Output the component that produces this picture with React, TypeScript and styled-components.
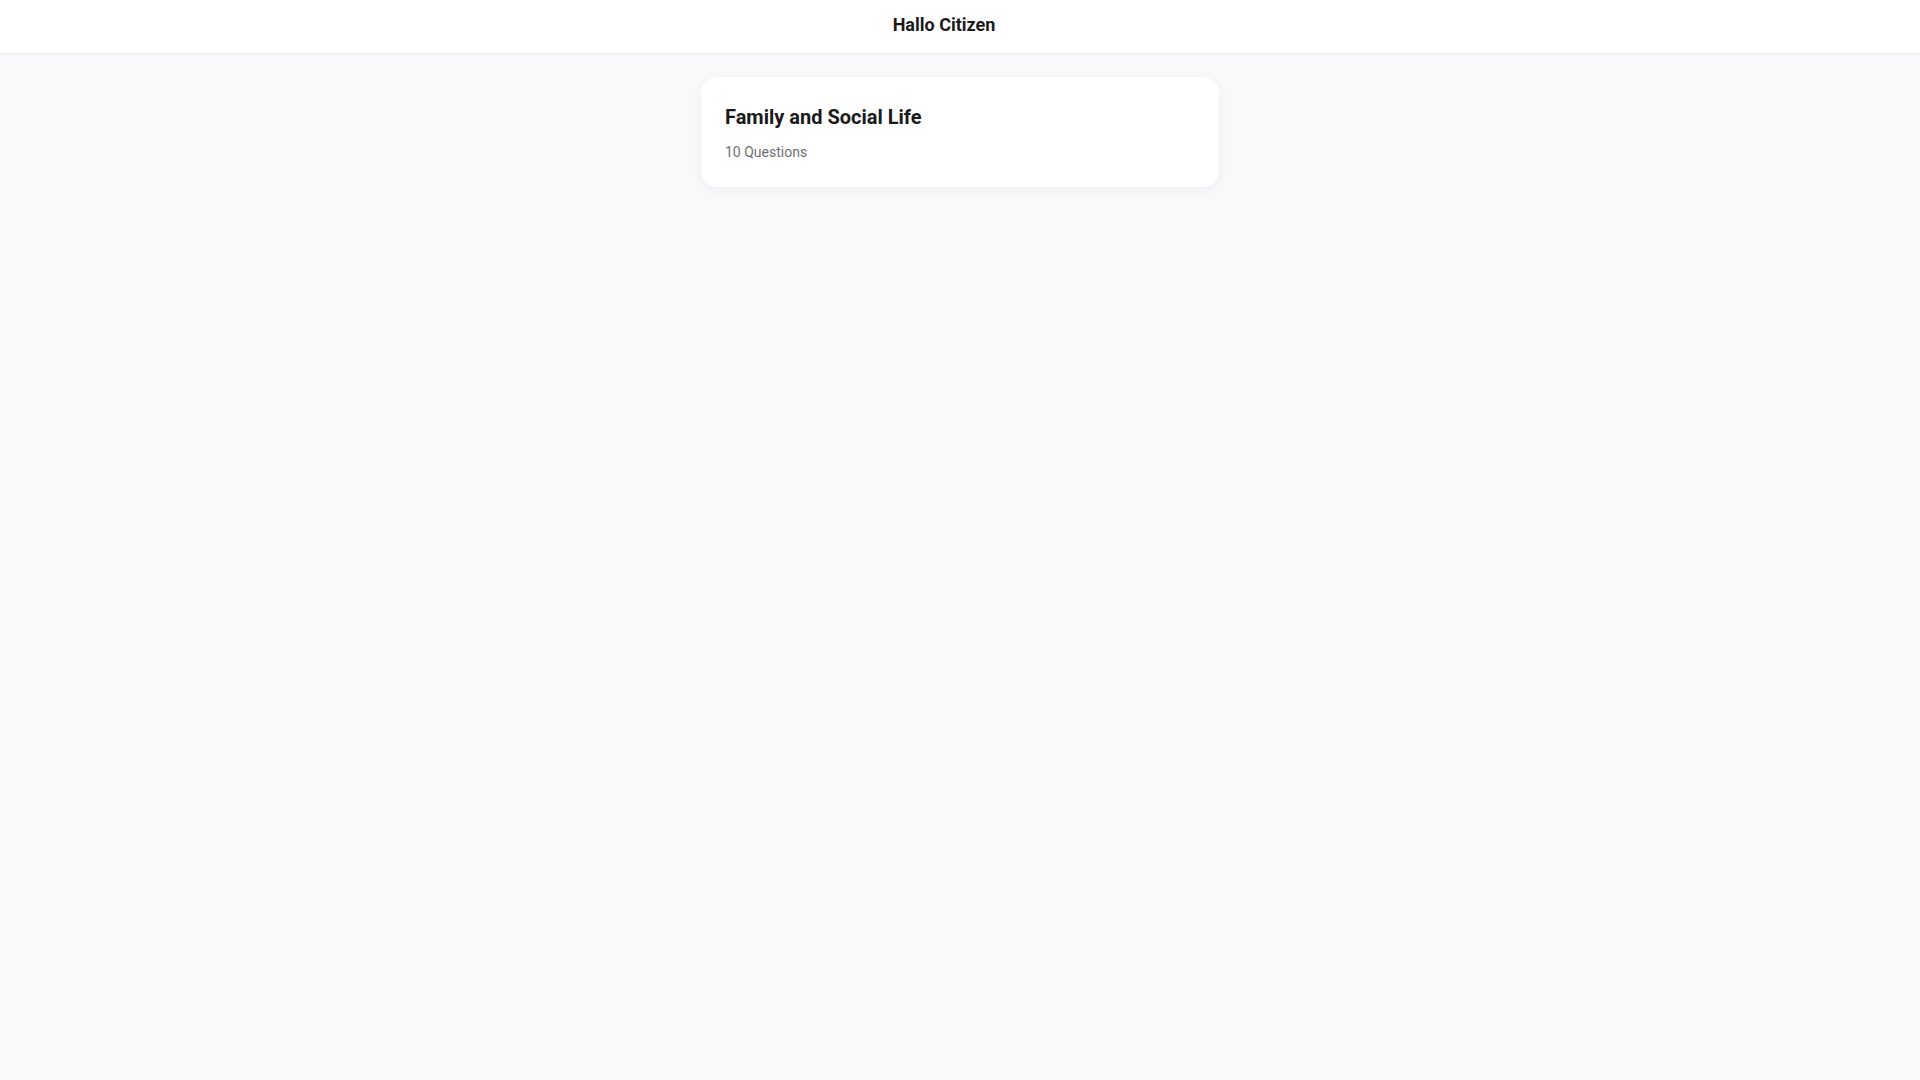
import styled, { createGlobalStyle } from "styled-components";

const GlobalStyle = createGlobalStyle`
  * { box-sizing: border-box; }
  html, body {
    margin: 0;
    padding: 0;
    background: #f9f9fb;
    font-family: Roboto, "Liberation Sans", sans-serif;
    color: #1a1a1a;
  }
`;

type Topic = {
  id: string;
  title: string;
  count: number;
};

const topics: Topic[] = [
  { id: "family", title: "Family and Social Life", count: 10 },
];

export default function App() {
  return (
    <>
      <GlobalStyle />
      <Page>
        <Header>
          <HeaderTitle>Hallo Citizen</HeaderTitle>
        </Header>
        <Main>
          {topics.map(t => (
            <TopicCard key={t.id}>
              <TopicTitle>{t.title}</TopicTitle>
              <TopicMeta>{t.count} Questions</TopicMeta>
            </TopicCard>
          ))}
        </Main>
      </Page>
    </>
  );
}

const Page = styled.div`
  min-height: 100vh;
  background: #f9f9fb;
  display: flex;
  flex-direction: column;
`;

const Header = styled.header`
  height: 54px;
  background: #ffffff;
  border-bottom: 1px solid #ececee;
  display: flex;
  align-items: center;
  justify-content: center;
  padding: 0 48px 3px 16px;
`;

const HeaderTitle = styled.h1`
  margin: 0;
  font-size: 18px;
  line-height: 26px;
  font-weight: 700;
  color: #1a1a1a;
`;

const Main = styled.main`
  display: flex;
  flex-direction: column;
  align-items: center;
  gap: 16px;
  padding: 23px 16px;
`;

const TopicCard = styled.div`
  width: 100%;
  max-width: 518px;
  background: #ffffff;
  border-radius: 16px;
  padding: 24px 24px 25px;
  box-shadow: 0 2px 12px rgba(0, 0, 0, 0.05);
  cursor: pointer;
`;

const TopicTitle = styled.h2`
  margin: 0;
  font-size: 20px;
  line-height: 32px;
  font-weight: 700;
  color: #1a1a1a;
`;

const TopicMeta = styled.div`
  margin-top: 9px;
  font-size: 14px;
  line-height: 20px;
  color: #6f6f74;
`;
